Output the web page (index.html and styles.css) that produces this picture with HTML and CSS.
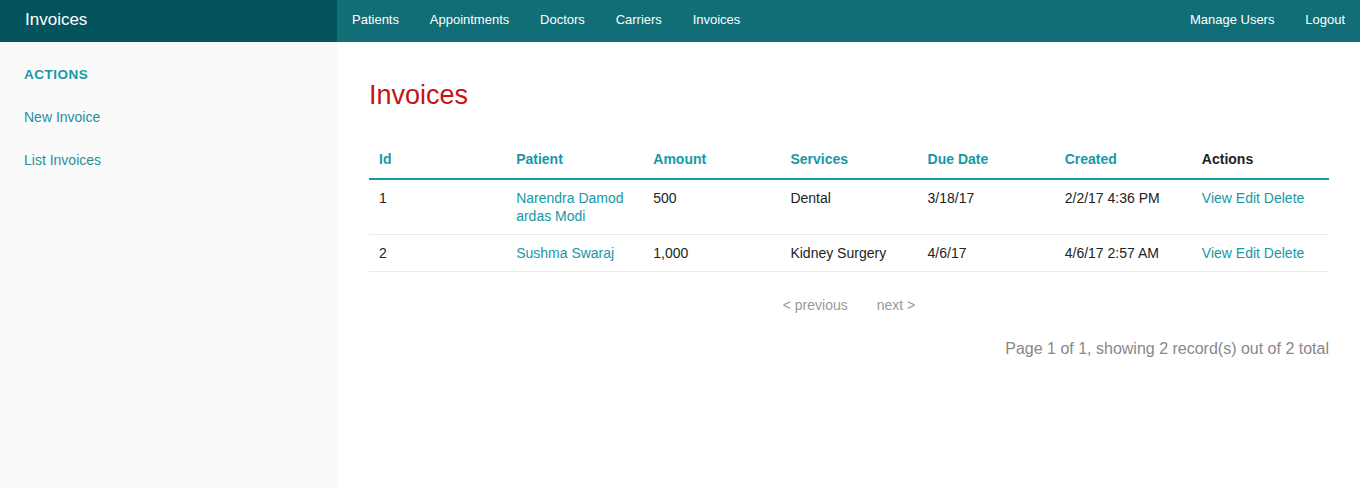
FILE: index.html
```html
<!DOCTYPE html>
<html lang="en">
<head>
<meta charset="utf-8">
<title>Invoices</title>
<link rel="stylesheet" href="styles.css">
</head>
<body>
<header class="top-bar">
  <div class="brand"><a href="#">Invoices</a></div>
  <nav class="top-nav">
    <ul class="nav-left">
      <li><a href="#">Patients</a></li>
      <li><a href="#">Appointments</a></li>
      <li><a href="#">Doctors</a></li>
      <li><a href="#">Carriers</a></li>
      <li><a href="#">Invoices</a></li>
    </ul>
    <ul class="nav-right">
      <li><a href="#">Manage Users</a></li>
      <li><a href="#">Logout</a></li>
    </ul>
  </nav>
</header>
<div class="layout">
  <aside class="side-nav">
    <div class="heading">Actions</div>
    <a href="#">New Invoice</a>
    <a href="#">List Invoices</a>
  </aside>
  <main class="content">
    <h3 class="title">Invoices</h3>
    <table class="records">
      <thead>
        <tr>
          <th><a href="#">Id</a></th>
          <th><a href="#">Patient</a></th>
          <th><a href="#">Amount</a></th>
          <th><a href="#">Services</a></th>
          <th><a href="#">Due Date</a></th>
          <th><a href="#">Created</a></th>
          <th class="plain">Actions</th>
        </tr>
      </thead>
      <tbody>
        <tr>
          <td>1</td>
          <td><a href="#">Narendra Damodardas Modi</a></td>
          <td>500</td>
          <td>Dental</td>
          <td>3/18/17</td>
          <td>2/2/17 4:36 PM</td>
          <td><a href="#">View</a> <a href="#">Edit</a> <a href="#">Delete</a></td>
        </tr>
        <tr>
          <td>2</td>
          <td><a href="#">Sushma Swaraj</a></td>
          <td>1,000</td>
          <td>Kidney Surgery</td>
          <td>4/6/17</td>
          <td>4/6/17 2:57 AM</td>
          <td><a href="#">View</a> <a href="#">Edit</a> <a href="#">Delete</a></td>
        </tr>
      </tbody>
    </table>
    <div class="paginator">
      <ul class="pagination">
        <li>&lt; previous</li>
        <li>next &gt;</li>
      </ul>
      <p class="counter">Page 1 of 1, showing 2 record(s) out of 2 total</p>
    </div>
  </main>
</div>
</body>
</html>
```
FILE: styles.css
```css
* { box-sizing: border-box; }
html, body { margin: 0; padding: 0; }
body {
  font-family: "Liberation Sans", Arial, Helvetica, sans-serif;
  color: #222;
  background: #fff;
  font-size: 14px;
}
a { text-decoration: none; color: #1798a5; }
ul { list-style: none; margin: 0; padding: 0; }

.top-bar {
  display: flex;
  height: 42px;
  background: #116d76;
}
.brand {
  width: 337px;
  flex: 0 0 337px;
  background: #03545c;
  display: flex;
  align-items: center;
  padding-left: 25px;
}
.brand a {
  color: #fff;
  font-size: 17px;
  line-height: 20px;
  margin-top: -2px;
}
.top-nav {
  flex: 1;
  display: flex;
  justify-content: space-between;
  align-items: center;
}
.nav-left, .nav-right { display: flex; }
.top-nav a {
  display: block;
  color: #fff;
  font-size: 13px;
  line-height: 20px;
  padding: 0 15.4px;
  margin-top: -3px;
}
.nav-left li:first-child a { padding-left: 15px; }
.nav-right li:last-child a { padding-right: 15px; }

.layout {
  display: flex;
  min-height: 446px;
}
.side-nav {
  width: 337px;
  flex: 0 0 337px;
  background: #fafafa;
  padding: 23px 24px;
  display: flex;
  flex-direction: column;
  gap: 23px;
}
.side-nav .heading {
  text-transform: uppercase;
  font-weight: bold;
  color: #1798a5;
  font-size: 13.5px;
  letter-spacing: 0.5px;
  line-height: 20px;
  margin-bottom: -1px;
}
.side-nav a {
  font-size: 14px;
  line-height: 20px;
  color: #2a8f9c;
}

.content {
  flex: 1;
  padding: 0 31px 0 32px;
}
.title {
  margin: 38px 0 31px;
  font-weight: normal;
  font-size: 27px;
  line-height: 30px;
  color: #c41414;
}
.records {
  width: 100%;
  border-collapse: collapse;
  table-layout: fixed;
}
.records th, .records td {
  text-align: left;
  padding: 9px 12px 9px 10px;
  line-height: 18px;
  font-size: 14px;
  vertical-align: top;
  word-break: break-all;
}
.records th {
  font-weight: bold;
  border-bottom: 2px solid #1798a5;
  padding-top: 9px;
  padding-bottom: 10px;
}
.records th.plain { color: #222; }
.records td {
  border-bottom: 1px solid #eaeaea;
  color: #222;
}

.paginator {
  margin-top: 23px;
}
.pagination {
  display: flex;
  justify-content: center;
  gap: 29px;
  line-height: 20px;
  font-size: 14px;
  color: #999;
}
.counter {
  margin: 23px 0 0;
  text-align: right;
  font-size: 16px;
  line-height: 22px;
  color: #888;
}
```
